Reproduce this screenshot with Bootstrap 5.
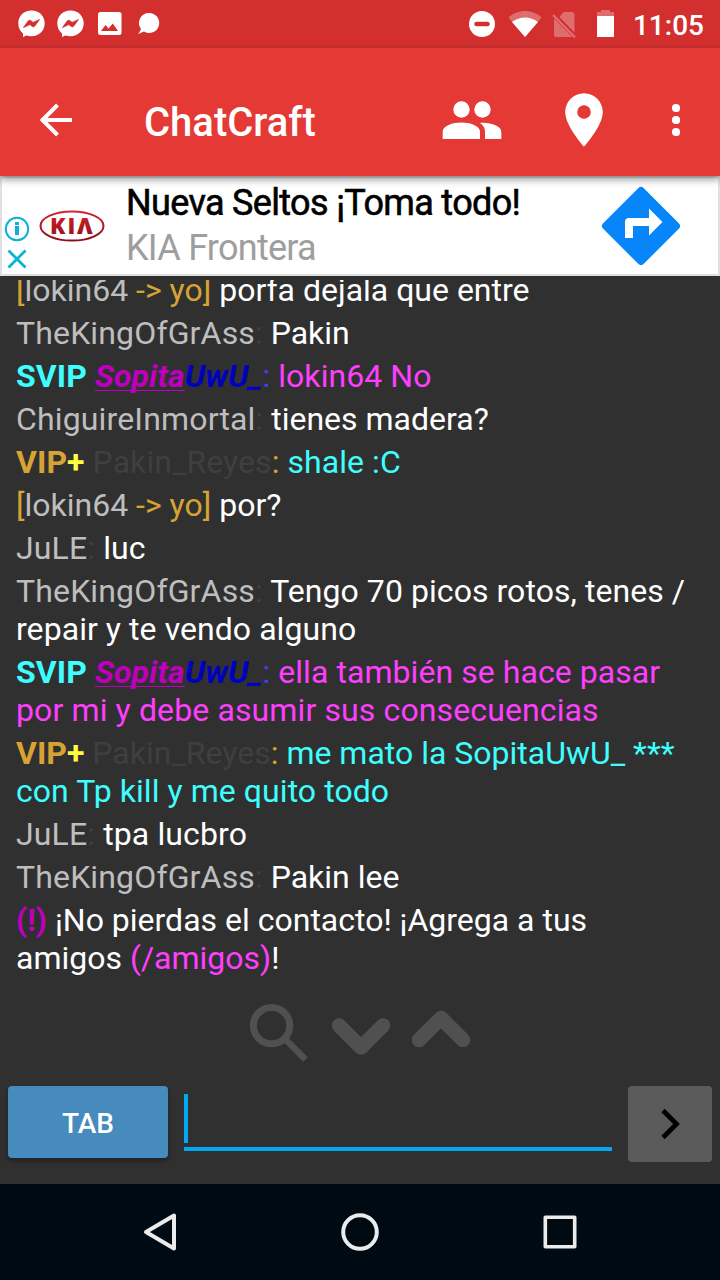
<!DOCTYPE html>
<html lang="es">
<head>
<meta charset="utf-8">
<meta name="viewport" content="width=device-width, initial-scale=1">
<title>ChatCraft</title>
<link href="https://cdn.jsdelivr.net/npm/bootstrap@5.3.0/dist/css/bootstrap.min.css" rel="stylesheet">
<style>
body { font-family: Roboto, "Liberation Sans", sans-serif; background: #303030; height: 1280px; overflow: hidden; color: #fff; }
svg { display: block; flex: none; }
.status-bar { height: 48px; background: #d32f2f; padding: 0 16px 0 18px; }
.clock { font-size: 28px; font-weight: 500; line-height: 48px; padding-top: 3px; margin-left: 12px; }
.app-bar { height: 128px; background: #e53935; padding: 16px 40px 0 36px; box-shadow: 0 3px 8px rgba(0,0,0,.45); z-index: 2; }
.app-title { font-size: 40px; font-weight: 500; line-height: 48px; margin: 6px 0 0 68px; }
.ad-box { height: 100px; background: #fff; border: 2px solid #e0e0e0; }
.ad-head { color: #000; font-size: 36px; line-height: 42px; letter-spacing: -.66px; -webkit-text-stroke: .6px #000; }
.ad-sub { color: #9e9e9e; font-size: 36px; line-height: 42px; letter-spacing: -.74px; margin-top: 3px; }
.ad-arrow { margin-right: 37px; }
.chat-log { height: 701px; margin-top: 4px; padding: 0 16px 4px; overflow: hidden; font-size: 32px; line-height: 38px; gap: 5px; }
.chat-log p { white-space: nowrap; flex: none; margin: 0; }
.sp-name { letter-spacing: .15px; } .sp-line { letter-spacing: .12px; } .sp-text { letter-spacing: .06px; }
.c-gray { color: #bebebe; } .c-dark { color: #3f3f3f; }
.c-gold { color: #d9a334; } .c-aqua { color: #3ffefe; } .c-pink { color: #fe3ffe; }
.c-purple { color: #be00be; } .c-navy { color: #0000be; } .c-blue { color: #3f3ffe; } .c-yellow { color: #fefe3f; }
.c-purple u { text-decoration-thickness: 1px; text-underline-offset: 3px; text-decoration-skip-ink: none; }
.tools { height: 105px; padding-top: 21px; }
.entry-row { height: 98px; padding: 0 8px; }
.btn-tab { width: 160px; height: 72px; background: #478abd; color: #fff; font-size: 28px; font-weight: 500; border: 0; border-radius: 4px; box-shadow: 0 3px 5px rgba(0,0,0,.35); padding: 3px 0 0; }
.entry-line { height: 65px; border-bottom: 4px solid #03a9f4; margin: 0 16px; padding-top: 8px; }
.caret { width: 4px; height: 49px; background: #03a9f4; }
.btn-send { width: 84px; height: 76px; background: #5a5a5b; border: 0; border-radius: 4px; padding: 0; }
.sys-nav { height: 96px; background: #000a12; }
</style>
</head>
<body class="d-flex flex-column">
<header class="status-bar d-flex align-items-center justify-content-between flex-shrink-0">
  <svg width="150" height="48" viewBox="18 0 150 48" fill="#fff">
    <g id="msgr"><path d="M31.500 10.500c-7.500 0-13.200 5.300-13.200 12.800 0 4.500 1.900 8 4.700 10.200v3.400l3.400-1.400c1.600.5 3.300.8 5.100.8 7.500 0 13.200-5.500 13.200-13S39 10.500 31.500 10.500z"/><path d="M23.500 27.500l4.500-6.300q1.300-1.700 3-.4l2.200 1.600 6.300-2.900-4.500 6.300q-1.300 1.700-3 .4l-2.200-1.600z" fill="#d32f2f" stroke="#d32f2f" stroke-width=".8" stroke-linejoin="round"/></g>
    <use href="#msgr" x="39"/>
    <path fill-rule="evenodd" d="M100.500 12h18.500a2.500 2.500 0 0 1 2.500 2.500v18a2.500 2.500 0 0 1-2.500 2.500h-18.500a2.500 2.500 0 0 1-2.500-2.500v-18a2.500 2.500 0 0 1 2.500-2.500zM101 31h17l-5.200-7.500-4.300 5-3-3.400z"/>
    <path d="M149 13a10 10 0 1 1-5 18.500l-6 2.500c2.500-3 2-3.500 3-5A10 10 0 0 1 149 13z"/>
  </svg>
  <div class="d-flex align-items-center">
    <svg width="154" height="48" viewBox="466 0 154 48" fill="#fff">
      <circle cx="481" cy="24" r="13"/><path d="M475.500 24h11" stroke="#d32f2f" stroke-width="4.500" stroke-linecap="round"/>
      <path opacity=".3" d="M507.500 17.500C512 13.200 518 11 524 11s12 2.200 16.500 6.500L524 37z"/><path d="M511 22c4-3 8.500-4.500 13-4.500s9 1.500 13 4.500L524 37z"/>
      <path opacity=".3" d="M562.500 12h8a3 3 0 0 1 3 3v17.500L558.500 17zM553 18.500V35a2 2 0 0 0 2 2h16z"/>
      <path opacity=".3" d="M552 15l22 22.500" stroke="#fff" stroke-width="2.500"/>
      <path opacity=".3" d="M600 10h9v2h4v4h-17v-4h4z"/><path d="M596 16h17v21h-17z"/>
    </svg>
    <span class="clock">11:05</span>
  </div>
</header>
<nav class="app-bar d-flex align-items-center position-relative flex-shrink-0">
  <svg width="40" height="40" viewBox="36 100 40 40"><path d="M72 120H42M57.500 105l-15 15 15 15" fill="none" stroke="#fff" stroke-width="4"/></svg>
  <h1 class="app-title">ChatCraft</h1>
  <svg class="ms-auto" width="240" height="60" viewBox="440 90 240 60" fill="#fff">
    <circle cx="461.500" cy="109.500" r="8.200"/><circle cx="482.500" cy="109.500" r="8.200"/>
    <path d="M442.700 139v-7.500c0-5.500 10-8.900 18.700-8.900s18.600 3.400 18.600 8.900v7.500zM480 123c10-.9 21.300 3 21.300 8.700v7.300H485v-7.300c0-3.600-1.800-6.600-5-8.700z"/>
    <path fill-rule="evenodd" d="M584 93.200c-10.400 0-18.800 8.400-18.800 18.800 0 14 18.800 34.700 18.800 34.700s18.800-20.700 18.800-34.700c0-10.400-8.400-18.800-18.800-18.800zm0 12a6.800 6.800 0 1 1 0 13.600 6.800 6.800 0 0 1 0-13.600z"/>
    <circle cx="676" cy="108" r="4.100"/><circle cx="676" cy="120" r="4.100"/><circle cx="676" cy="132" r="4.100"/>
  </svg>
</nav>
<section class="ad-box d-flex flex-shrink-0">
  <svg width="124" height="96" viewBox="2 178 124 96">
    <defs><linearGradient id="kr" x1="0" y1="0" x2="0" y2="1"><stop offset="0" stop-color="#d9222e"/><stop offset="1" stop-color="#8c1016"/></linearGradient></defs>
    <g fill="none" stroke="#0bb2d4" stroke-width="2"><circle cx="17" cy="229" r="11.200"/><path d="M8.500 250.500l17 17M25.500 250.500l-17 17" stroke-width="2.800"/></g>
    <path d="M15 226h4v9h-4zM15 222h4v3h-4z" fill="#0bb2d4"/>
    <ellipse cx="72" cy="226" rx="31.500" ry="14.600" fill="#fff" stroke="url(#kr)" stroke-width="2"/>
    <text x="50 67.500 77" y="234" font-family="Open Sans, sans-serif" font-weight="800" font-size="22.500" fill="url(#kr)">KIΛ</text>
  </svg>
  <div class="pt-1">
    <div class="ad-head">Nueva Seltos ¡Toma todo!</div>
    <div class="ad-sub">KIA Frontera</div>
  </div>
  <svg class="ms-auto ad-arrow" width="80" height="96" viewBox="601 178 80 96">
    <path d="M638.200 188.200q2.800-2.800 5.600 0l35 35q2.800 2.800 0 5.600l-35 35q-2.800 2.800-5.600 0l-35-35q-2.800-2.800 0-5.600z" fill="#0786f9"/>
    <path d="M625 238v-16q0-4 4-4h20v-9.500l13.500 13.500-13.500 13.500V226h-16v12z" fill="#fff"/>
  </svg>
</section>
<main class="chat-log d-flex flex-column justify-content-end flex-shrink-0">
  <p><span class="c-gold">[</span><span class="c-gray">lokin64</span> <span class="c-gold">-&gt; yo]</span> porfa dejala que entre</p>
  <p><span class="c-gray sp-name">TheKingOfGrAss</span><span class="c-dark">:</span> Pakin</p>
  <p class="c-pink sp-text"><b class="c-aqua">SVIP</b> <b class="fst-italic"><span class="c-purple"><u>Sopita</u></span><span class="c-navy">UwU_</span></b><span class="c-blue">:</span> lokin64 No</p>
  <p><span class="c-gray sp-name">ChiguireInmortal</span><span class="c-dark">:</span> tienes madera?</p>
  <p class="c-aqua sp-text"><b class="c-gold">VIP<span class="c-yellow">+</span></b> <span class="c-dark">Pakin_Reyes</span><span class="c-gold">:</span> shale :C</p>
  <p><span class="c-gold">[</span><span class="c-gray">lokin64</span> <span class="c-gold">-&gt; yo]</span> por?</p>
  <p class="sp-line"><span class="c-gray">JuLE</span><span class="c-dark">:</span> luc</p>
  <p class="sp-text"><span class="c-gray sp-name">TheKingOfGrAss</span><span class="c-dark">:</span> Tengo 70 picos rotos, tenes /<br>repair y te vendo alguno</p>
  <p class="c-pink sp-text"><b class="c-aqua">SVIP</b> <b class="fst-italic"><span class="c-purple"><u>Sopita</u></span><span class="c-navy">UwU_</span></b><span class="c-blue">:</span> ella también se hace pasar<br><span class="sp-line">por mi y debe asumir sus consecuencias</span></p>
  <p class="c-aqua"><b class="c-gold">VIP<span class="c-yellow">+</span></b> <span class="c-dark">Pakin_Reyes</span><span class="c-gold">:</span> me mato la SopitaUwU_ ***<br><span class="sp-text">con Tp kill y me quito todo</span></p>
  <p class="sp-line"><span class="c-gray">JuLE</span><span class="c-dark">:</span> tpa lucbro</p>
  <p><span class="c-gray sp-name">TheKingOfGrAss</span><span class="c-dark">:</span> Pakin lee</p>
  <p><b class="c-purple">(!)</b> ¡No pierdas el contacto! ¡Agrega a tus<br>amigos <span class="c-pink">(/amigos)</span>!</p>
</main>
<div class="tools d-flex justify-content-center flex-shrink-0">
  <svg width="224" height="64" viewBox="248 1002 224 64" fill="none" stroke="#505050">
    <circle cx="271.600" cy="1025.600" r="18.200" stroke-width="7"/><path d="M286 1040l3.500 3.500 16 16" stroke-width="6.500"/>
    <path d="M339 1025.500l22 22 22-22M419 1040l22-22 22 22" stroke-width="14.500" stroke-linecap="round" stroke-linejoin="round"/>
  </svg>
</div>
<div class="entry-row d-flex align-items-start flex-shrink-0">
  <button class="btn btn-tab" type="button">TAB</button>
  <div class="entry-line flex-grow-1"><div class="caret"></div></div>
  <button class="btn btn-send d-flex align-items-center justify-content-center" type="button" aria-label="Enviar">
    <svg width="84" height="76" viewBox="628 1086 84 76"><path d="M663 1110.500l13.500 13.500-13.500 13.500" fill="none" stroke="#000" stroke-width="4.800"/></svg>
  </button>
</div>
<footer class="sys-nav d-flex justify-content-center flex-shrink-0">
  <svg width="720" height="96" viewBox="0 1184 720 96" fill="none" stroke="#ebebeb" stroke-width="4" stroke-linejoin="round">
    <path d="M146 1232l28-16.500v33z"/><circle cx="360" cy="1232" r="16.800"/><rect x="545.300" y="1217.300" width="29.400" height="29.400" stroke-width="3.600"/>
  </svg>
</footer>
<script src="https://cdn.jsdelivr.net/npm/bootstrap@5.3.0/dist/js/bootstrap.bundle.min.js"></script>
</body>
</html>
